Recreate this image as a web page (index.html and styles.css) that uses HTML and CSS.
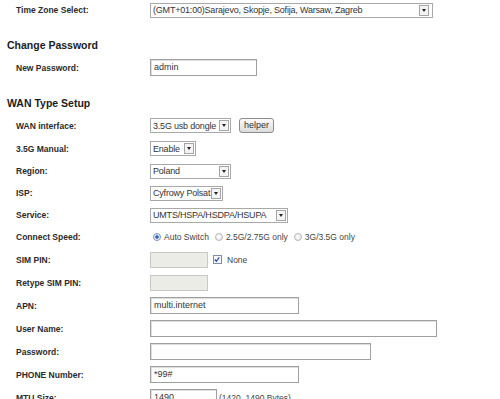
FILE: index.html
```html
<!DOCTYPE html>
<html lang="en">
<head>
    <meta charset="UTF-8">
    <title>3.5G Setup</title>
    <link rel="stylesheet" href="styles.css">
</head>
<body>
    <div class="page">
        <div class="row row-top">
            <span class="label">Time Zone Select:</span>
            <div class="select w-tz"><span class="val">(GMT+01:00)Sarajevo, Skopje, Sofija, Warsaw, Zagreb</span><span class="arrow arrow-inset"></span></div>
        </div>

        <h3 class="section first">Change Password</h3>
        <div class="row">
            <span class="label">New Password:</span>
            <span class="input w-pass">admin</span>
        </div>

        <h3 class="section">WAN Type Setup</h3>
        <div class="row">
            <span class="label">WAN interface:</span>
            <div class="select w-wan"><span class="val">3.5G usb dongle</span><span class="arrow"></span></div>
            <span class="button">helper</span>
        </div>
        <div class="row">
            <span class="label">3.5G Manual:</span>
            <div class="select w-enable"><span class="val">Enable</span><span class="arrow"></span></div>
        </div>
        <div class="row short">
            <span class="label">Region:</span>
            <div class="select w-region"><span class="val">Poland</span><span class="arrow"></span></div>
        </div>
        <div class="row short">
            <span class="label">ISP:</span>
            <div class="select w-isp"><span class="val">Cyfrowy Polsat</span><span class="arrow"></span></div>
        </div>
        <div class="row short">
            <span class="label">Service:</span>
            <div class="select w-service"><span class="val">UMTS/HSPA/HSDPA/HSUPA</span><span class="arrow"></span></div>
        </div>
        <div class="row short">
            <span class="label">Connect Speed:</span>
            <span class="radio checked"></span><span class="opt">Auto Switch</span>
            <span class="radio"></span><span class="opt">2.5G/2.75G only</span>
            <span class="radio"></span><span class="opt">3G/3.5G only</span>
        </div>
        <div class="row">
            <span class="label">SIM PIN:</span>
            <span class="input w-pin disabled"></span>
            <span class="check">
                <svg width="9" height="9" viewBox="0 0 9 9"><path d="M2 4.5 L3.8 6.5 L7 2" fill="none" stroke="#2a4fa8" stroke-width="1.4"/></svg>
            </span>
            <span class="opt">None</span>
        </div>
        <div class="row">
            <span class="label">Retype SIM PIN:</span>
            <span class="input w-pin disabled"></span>
        </div>
        <div class="row">
            <span class="label">APN:</span>
            <span class="input w-apn">multi.internet</span>
        </div>
        <div class="row">
            <span class="label">User Name:</span>
            <span class="input w-user"></span>
        </div>
        <div class="row">
            <span class="label">Password:</span>
            <span class="input w-pwd"></span>
        </div>
        <div class="row">
            <span class="label">PHONE Number:</span>
            <span class="input w-apn">*99#</span>
        </div>
        <div class="row">
            <span class="label">MTU Size:</span>
            <span class="input w-mtu">1490</span>
            <span class="note">(1420..1490 Bytes)</span>
        </div>
    </div>
</body>
</html>
```

FILE: styles.css
```css
body {
    margin: 0;
    background-color: #fff;
    font-family: "Liberation Sans", Arial, sans-serif;
    color: #333;
}

.page {
    width: 500px;
    height: 399px;
    overflow: hidden;
}

.row {
    display: flex;
    align-items: center;
    height: 23px;
}

.row.short {
    height: 22px;
}

.row-top {
    height: 20px;
}

.label {
    width: 134px;
    padding-left: 16px;
    font-size: 8.5px;
    font-weight: bold;
    color: #2b2b2b;
    flex-shrink: 0;
}

.section {
    margin: 17px 0 4px 7px;
    height: 14px;
    line-height: 14px;
    font-size: 10.5px;
    font-weight: bold;
    color: #1c1c1c;
}

.section.first {
    margin-top: 18px;
}

.select {
    display: flex;
    align-items: center;
    justify-content: space-between;
    box-sizing: border-box;
    height: 15px;
    padding: 0 1px 0 2px;
    border: 1px solid #a9a9a9;
    background-color: #fff;
    font-size: 9px;
    color: #333;
    white-space: nowrap;
}

.val {
    letter-spacing: -0.2px;
}

.arrow {
    position: relative;
    box-sizing: border-box;
    width: 10px;
    height: 11px;
    margin-left: 1px;
    border: 1px solid #a5a5a5;
    background-color: #f4f4f4;
    flex-shrink: 0;
}

.arrow::after {
    content: "";
    position: absolute;
    left: 2px;
    top: 3px;
    border-left: 2px solid transparent;
    border-right: 2px solid transparent;
    border-top: 3px solid #222;
}

.arrow-inset {
    margin-right: 2px;
}

.w-tz { width: 283px; }
.w-wan { width: 81px; }
.w-enable { width: 46px; }
.w-region { width: 81px; }
.w-isp { width: 73px; }
.w-service { width: 138px; }

.button {
    box-sizing: border-box;
    height: 15px;
    margin-left: 8px;
    padding: 0 4px;
    border: 1px solid #8c8c8c;
    border-radius: 3px;
    background: linear-gradient(#fbfbfb, #dcdcdc);
    font-size: 9px;
    line-height: 13px;
    color: #333;
}

.input {
    box-sizing: border-box;
    height: 17px;
    padding: 0 3px;
    border: 1px solid #a0a0a0;
    box-shadow: inset 1px 1px 0 #dedede;
    background-color: #fff;
    font-size: 9px;
    line-height: 15px;
    color: #333;
}

.input.disabled {
    background-color: #ecece6;
    border-color: #c8c8c4;
    box-shadow: none;
}

.w-pass { width: 107px; }
.w-pin { width: 58px; height: 16px; }
.w-apn { width: 149px; }
.w-user { width: 287px; }
.w-pwd { width: 221px; }
.w-mtu { width: 67px; }

.radio {
    box-sizing: border-box;
    width: 8px;
    height: 8px;
    margin: 0 3px 0 3px;
    border: 1px solid #b5b5b5;
    border-radius: 50%;
    background: radial-gradient(circle at 40% 40%, #fff, #e2e2e2);
}

.radio.checked {
    border-color: #7a96b8;
    background: radial-gradient(circle, #2f5fb0 0, #3c6fc2 35%, #dfe8f3 45%, #fff 100%);
}

.opt {
    margin-right: 3px;
    font-size: 8.5px;
    color: #444;
}

.check {
    display: flex;
    box-sizing: border-box;
    width: 9px;
    height: 9px;
    margin: 0 5px 0 5px;
    border: 1px solid #7c8fa8;
    background-color: #f7f7f7;
}

.check svg {
    margin: -1px 0 0 -1px;
}

.note {
    margin-left: 2px;
    font-size: 8.5px;
    color: #444;
}
```
